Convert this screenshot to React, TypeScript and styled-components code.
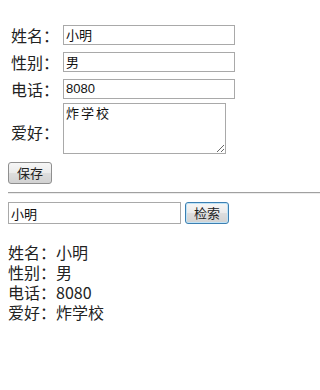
import React, { useState } from 'react';
import styled, { createGlobalStyle } from 'styled-components';

const GlobalStyle = createGlobalStyle`
    body {
        margin: 8px 0 8px 8px;
        background: #fff;
        color: #222;
        font-family: 'Noto Sans CJK SC', 'Liberation Sans', sans-serif;
    }
`;

const FormGrid = styled.div`
    display: grid;
    grid-template-columns: 48px 172px;
    grid-template-rows: 27px 27px 27px 59px;
    column-gap: 4px;
    align-items: center;
    padding: 13px 0 0 3px;
`;

const Label = styled.label`
    font-size: 16px;
    line-height: 20px;
    color: #222;
    white-space: nowrap;
`;

const TextInput = styled.input<{ width: number; boxHeight?: number }>`
    box-sizing: border-box;
    width: ${({ width }) => width}px;
    height: ${({ boxHeight }) => boxHeight ?? 20}px;
    margin: 0;
    padding: 1px 2px;
    border: 1px solid #a9a9a9;
    font-family: 'Liberation Sans', 'Noto Sans CJK SC', sans-serif;
    font-size: 13px;
    color: #111;
    outline: none;
`;

const TextArea = styled.textarea`
    box-sizing: border-box;
    align-self: start;
    width: 163px;
    height: 51px;
    margin: 1px 0 0;
    padding: 1px 2px;
    border: 1px solid #a9a9a9;
    font-family: 'Noto Sans CJK SC', sans-serif;
    font-size: 13px;
    letter-spacing: 2px;
    line-height: 16px;
    color: #111;
    outline: none;
`;

const Button = styled.button<{ focused?: boolean }>`
    box-sizing: border-box;
    height: 22px;
    margin: 0;
    padding: 0 8px;
    border: 1px solid ${({ focused }) => (focused ? '#3c7fb1' : '#8f8f8f')};
    border-radius: 3px;
    background: linear-gradient(#f6f6f6, #ebebeb 50%, #dedede 50%, #d2d2d2);
    font-family: 'Noto Sans CJK SC', sans-serif;
    font-size: 13px;
    line-height: 18px;
    color: #222;
    box-shadow: ${({ focused }) => (focused ? 'inset 0 0 0 1px #bfe3f7' : 'none')};
`;

const SaveRow = styled.div`
    display: flex;
    margin-top: 1px;
`;

const Rule = styled.hr`
    margin: 8px 0 0;
    border: none;
    border-top: 1px solid #a0a0a0;
    border-bottom: 1px solid #ececec;
`;

const SearchRow = styled.div`
    display: flex;
    gap: 4px;
    margin-top: 8px;
`;

const Results = styled.div`
    margin-top: 18px;
    font-size: 16px;
    line-height: 20px;
    color: #222;
`;

const ResultLine = styled.div`
    height: 20px;
`;

const App: React.FC = () => {
    const [person, setPerson] = useState({ name: '小明', gender: '男', phone: '8080', hobby: '炸学校' });
    const [keyword, setKeyword] = useState('小明');

    return (
        <>
            <GlobalStyle />
            <FormGrid>
                <Label>姓名：</Label>
                <TextInput width={172} value={person.name} onChange={(e) => setPerson({ ...person, name: e.target.value })} />
                <Label>性别：</Label>
                <TextInput width={172} value={person.gender} onChange={(e) => setPerson({ ...person, gender: e.target.value })} />
                <Label>电话：</Label>
                <TextInput width={172} value={person.phone} onChange={(e) => setPerson({ ...person, phone: e.target.value })} />
                <Label>爱好：</Label>
                <TextArea value={person.hobby} onChange={(e) => setPerson({ ...person, hobby: e.target.value })} />
            </FormGrid>
            <SaveRow>
                <Button>保存</Button>
            </SaveRow>
            <Rule />
            <SearchRow>
                <TextInput width={173} boxHeight={22} value={keyword} onChange={(e) => setKeyword(e.target.value)} />
                <Button focused>检索</Button>
            </SearchRow>
            <Results>
                <ResultLine>姓名：{person.name}</ResultLine>
                <ResultLine>性别：{person.gender}</ResultLine>
                <ResultLine>电话：{person.phone}</ResultLine>
                <ResultLine>爱好：{person.hobby}</ResultLine>
            </Results>
        </>
    );
};

export default App;
